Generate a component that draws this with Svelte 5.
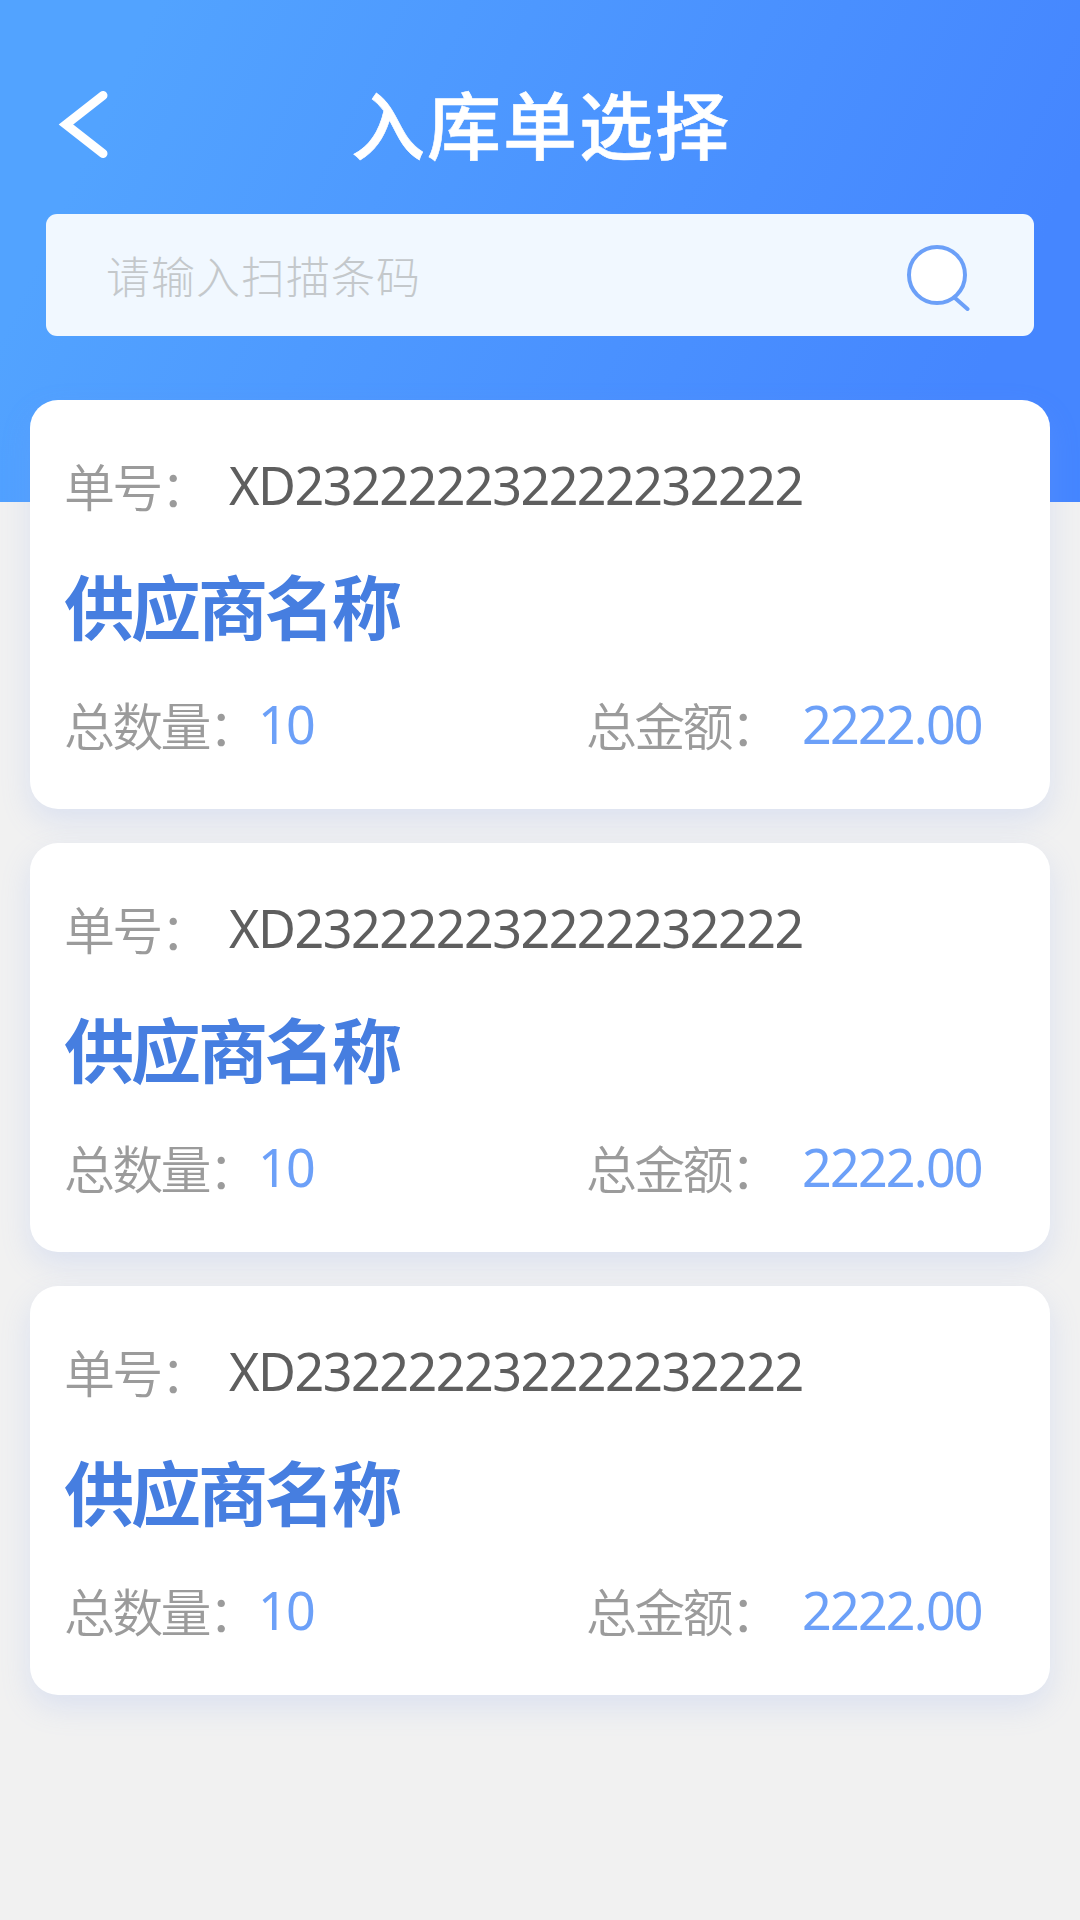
<script lang="ts">
  interface Order {
    no: string;
    supplier: string;
    count: number;
    amount: string;
  }

  const orders: Order[] = [
    { no: 'XD232222232222232222', supplier: '供应商名称', count: 10, amount: '2222.00' },
    { no: 'XD232222232222232222', supplier: '供应商名称', count: 10, amount: '2222.00' },
    { no: 'XD232222232222232222', supplier: '供应商名称', count: 10, amount: '2222.00' },
  ];
</script>

<div class="page">
  <header>
    <div class="nav">
      <svg class="back" width="56" height="76" viewBox="0 0 56 76">
        <path d="M49 9.5 L12 38.5 L49 67.5" fill="none" stroke="#fff" stroke-width="9" stroke-linecap="round" stroke-linejoin="miter" />
      </svg>
      <h1>入库单选择</h1>
    </div>
    <div class="search">
      <span class="placeholder">请输入扫描条码</span>
      <svg width="70" height="72" viewBox="0 0 70 72">
        <path d="M49 59 L61.5 70" stroke="#6ca0f8" stroke-width="4" stroke-linecap="round" />
        <circle cx="31" cy="36" r="28" fill="#fff" stroke="#6ca0f8" stroke-width="4" />
      </svg>
    </div>
  </header>

  <main>
    {#each orders as order}
      <section class="card">
        <div class="row">
          <span class="label">单号：</span>
          <span class="no">{order.no}</span>
        </div>
        <h2>{order.supplier}</h2>
        <div class="row totals">
          <span class="label">总数量：</span>
          <span class="num">{order.count}</span>
          <span class="label amount">总金额：</span>
          <span class="num">{order.amount}</span>
        </div>
      </section>
    {/each}
  </main>
</div>

<style>
  :global(body) { background: #f1f1f1; }

  .page {
    height: 1920px;
    overflow: hidden;
    font-family: 'Noto Sans CJK SC', sans-serif;
  }

  header {
    box-sizing: border-box;
    height: 502px;
    padding: 86px 46px 0;
    background: linear-gradient(115deg, #52a3ff 12%, #4586ff 88%);
  }
  .nav {
    display: grid;
    grid-template-columns: 80px 1fr 80px;
    height: 128px;
  }
  .back { margin-left: 8px; }
  h1 {
    margin: 0 -2px 0 0;
    text-align: center;
    white-space: nowrap;
    font-size: 74px; line-height: 72px;
    font-weight: 500;
    letter-spacing: 2px;
    color: #fff;
    -webkit-text-stroke: 0.6px #fff;
  }

  .search {
    box-sizing: border-box;
    display: flex; align-items: center; justify-content: space-between;
    height: 122px;
    padding: 0 58px 0 60px;
    border-radius: 11px;
    background: #f1f8ff;
  }
  .placeholder {
    font-size: 44px; line-height: 60px;
    font-weight: 300;
    letter-spacing: 1px;
    color: #c4c8cb;
  }

  main {
    display: flex; flex-direction: column;
    gap: 34px;
    margin-top: -102px;
    padding: 0 30px;
    position: relative;
  }
  .card {
    box-sizing: border-box;
    height: 409px;
    padding: 49px 36px 0 34px;
    border-radius: 28px;
    background: #fff;
    box-shadow: 0 12px 30px rgba(128, 158, 241, 0.19);
  }
  .row {
    display: flex;
    height: 72px;
    line-height: 72px;
    white-space: nowrap;
  }
  .label {
    width: 165px;
    font-size: 51px;
    font-weight: 350;
    letter-spacing: -2.8px;
    color: #9b9b9b;
  }
  .no, .num {
    font-family: 'Noto Sans', sans-serif;
    font-size: 52px;
    letter-spacing: -1.6px;
  }
  .no { color: #5e5e5e; letter-spacing: -1.5px; }
  .num { color: #6ca0f8; letter-spacing: -1.8px; }
  h2 {
    margin: 41px 0 40px;
    font-size: 70px; line-height: 86px;
    font-weight: 700;
    letter-spacing: -3px;
    color: #467ee0;
  }
  .totals .label { width: 194px; }
  .totals .amount { width: 216px; }
  .totals .num:nth-child(2) { width: 328px; }
</style>
